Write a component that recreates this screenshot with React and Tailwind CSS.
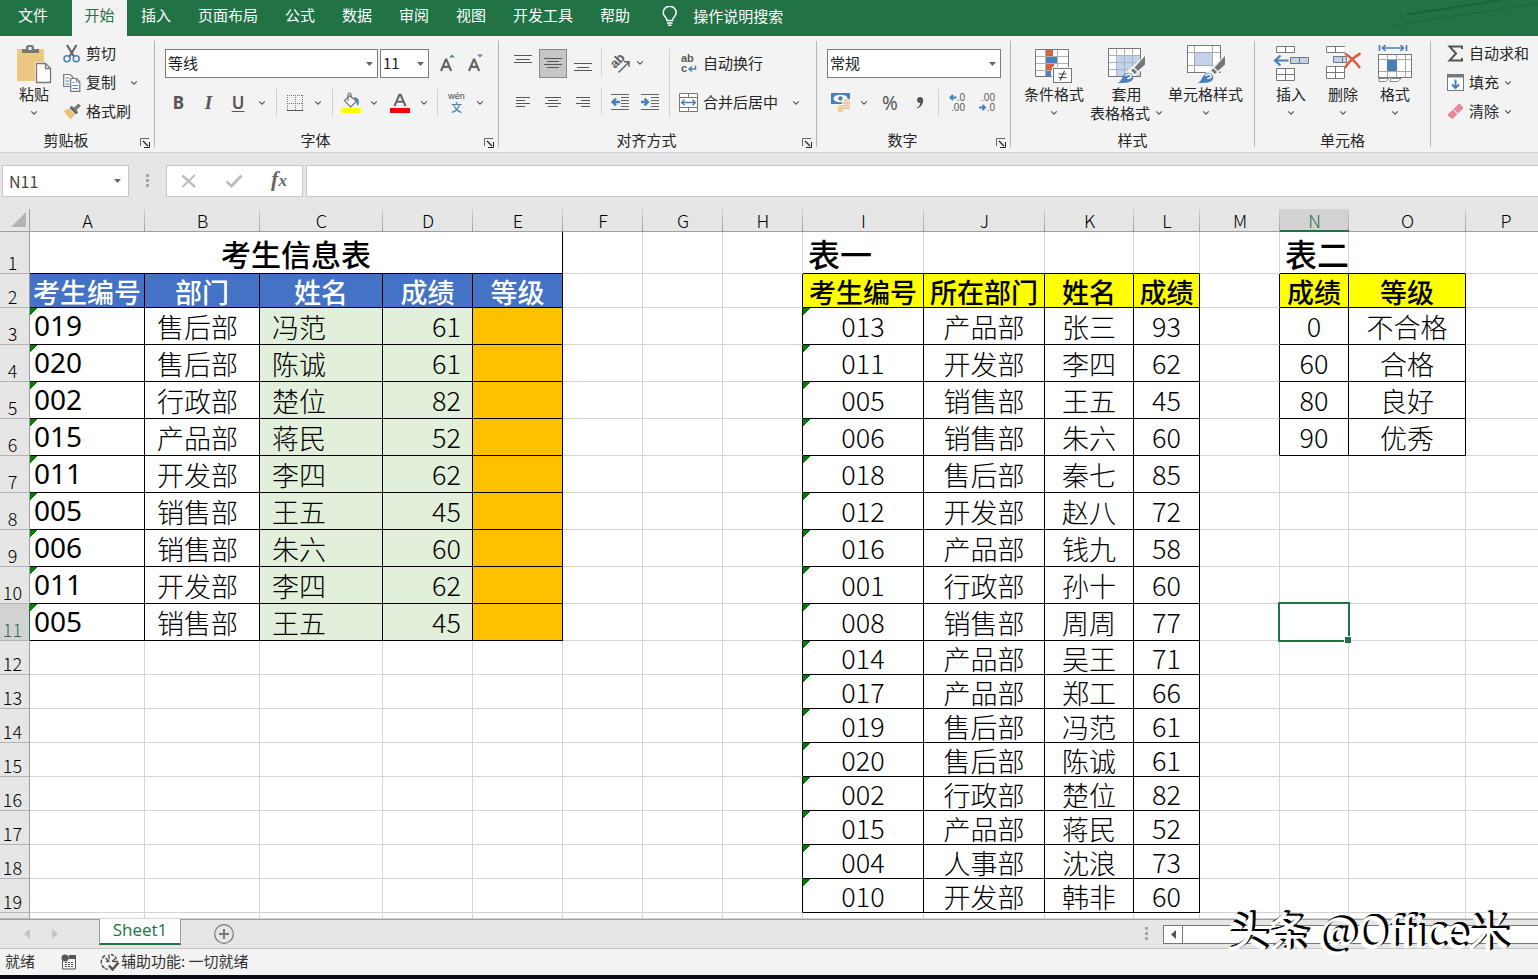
import React from "react";

const cjk = "font-['Noto_Sans_CJK_SC',sans-serif]";

/* ---------- small pieces ---------- */

const Chevron = () => (
  <svg width="8" height="6" viewBox="0 0 8 6" fill="none" className="shrink-0" aria-hidden="true">
    <path d="M1.2 1.4 4 4.1 6.8 1.4" stroke="#555" strokeWidth="1.2" />
  </svg>
);

const Triangle = () => (
  <svg width="7" height="4" viewBox="0 0 7 4" aria-hidden="true">
    <path d="M0 0h7L3.500 4z" fill="#666" />
  </svg>
);

const Rule = ({ className = "h-[27px]" }) => <div className={`w-px shrink-0 bg-[#cfcfcf] ${className}`} />;

const Launcher = () => (
  <button type="button" aria-label="更多设置" className="flex h-[12px] w-[12px] items-center justify-center">
    <svg width="10" height="10" viewBox="0 0 10 10" fill="none" stroke="#666" aria-hidden="true">
      <path d="M.5 8V.5H9" />
      <path d="M3 3l5 5" stroke="#222" strokeWidth="1.200" />
      <path d="M9.500 4v5.500H4" stroke="#222" />
    </svg>
  </button>
);

function Group({ label, width, launcher, last, children }) {
  return (
    <section aria-label={label || "编辑"} className={`flex shrink-0 ${width}`}>
      <div className="flex min-w-0 flex-1 flex-col">
        <div className="h-[93px]">{children}</div>
        {label && (
          <div className="flex h-[23px] items-center">
            <div className="flex-1 pb-[2px] text-center">{label}</div>
            {launcher && (
              <div className="flex w-[22px] justify-end pt-[4px] pr-[3px]">
                <Launcher />
              </div>
            )}
          </div>
        )}
      </div>
      {!last && <div className="my-[5px] w-px bg-[#b4b4b4]" />}
    </section>
  );
}

function Combo({ label, value, options, width }) {
  return (
    <div className={`relative h-[29px] ${width}`}>
      <select
        aria-label={label}
        defaultValue={value}
        className="h-full w-full appearance-none border border-[#7b7b7b] bg-white px-[2px] pb-[2px] text-[15px] leading-[24px] text-[#222] outline-none"
      >
        {options.map((o) => (
          <option key={o}>{o}</option>
        ))}
      </select>
      <span className="pointer-events-none absolute inset-y-0 right-[5px] flex items-center">
        <Triangle />
      </span>
    </div>
  );
}

const IconButton = ({ label, width = "w-[30px]", className = "", children }) => (
  <button type="button" aria-label={label} className={`flex h-[29px] shrink-0 items-center justify-center ${width} ${className}`}>
    {children}
  </button>
);

const DropArrow = ({ label, width = "w-[16px]" }) => (
  <button type="button" aria-label={label} className={`flex h-[27px] shrink-0 items-center justify-center ${width}`}>
    <Chevron />
  </button>
);

/* ---------- icons ---------- */

const PasteIcon = () => (
  <svg width="36" height="40" viewBox="0 0 36 40" aria-hidden="true">
    <rect x="1" y="5" width="27" height="32" rx="1" fill="#ecc880" />
    <path d="M6 9V5h4V3.500A2.500 2.500 0 0 1 12.500 1h3A2.500 2.500 0 0 1 18 3.500V5h5v4z" fill="#777" />
    <rect x="12.500" y="3" width="3" height="3" fill="#f3f3f3" />
    <path d="M19 18h11l6 6v16H19z" fill="#f3f3f3" />
    <path d="M20.500 19.500h9l5 5v14h-14z" fill="#fff" stroke="#777" strokeWidth="1.300" />
    <path d="M29.500 19.500v5h5" fill="none" stroke="#777" strokeWidth="1.300" />
  </svg>
);

const CutIcon = () => (
  <svg width="18" height="19" viewBox="0 0 18 19" fill="none" aria-hidden="true">
    <path d="M4 1l7 11.500M13.500 1L6.500 12.500" stroke="#666" strokeWidth="2.200" />
    <circle cx="4" cy="14.700" r="3" stroke="#4a80ba" strokeWidth="1.500" />
    <circle cx="13.200" cy="14.700" r="3" stroke="#4a80ba" strokeWidth="1.500" />
  </svg>
);

const CopyIcon = () => (
  <svg width="18" height="19" viewBox="0 0 18 19" fill="none" aria-hidden="true">
    <path d="M.7 1.500h6.500l2.800 2.800V13.500H.7z" fill="#fff" stroke="#777" strokeWidth="1.200" />
    <path d="M2.500 5h4M2.500 8h4M2.500 11h4" stroke="#4a80ba" />
    <path d="M7.700 5.500h5.800l3.300 3.300v9.500H7.700z" fill="#fff" stroke="#777" strokeWidth="1.200" />
    <path d="M13.300 5.500v3.500h3.500" stroke="#777" />
    <path d="M9.500 9.500h2M9.500 12.500h5.500M9.500 15.500h5.500" stroke="#4a80ba" />
  </svg>
);

const BrushIcon = () => (
  <svg width="18" height="17" viewBox="0 0 18 17" aria-hidden="true">
    <path d="M.5 8 6 5.500l6 6L7.500 16.500z" fill="#ecc07c" />
    <path d="M6.500 5l2.200-2.200 6.500 6.500L13 11.500z" fill="#666" />
    <path d="M10.500 5 15.500.5 17.800 3 13 7.500z" fill="#777" />
  </svg>
);

const GrowIcon = ({ down }) => (
  <svg width="18" height="18" viewBox="0 0 18 18" fill="none" aria-hidden="true">
    <path d="M2 17 6.800 5.500h.6L12.200 17M3.800 12.900h6.600" stroke="#666" strokeWidth="2.100" />
    {down ? <path d="M10 .5h6l-3 3z" fill="#4a80ba" /> : <path d="M10 3.500h6l-3-3z" fill="#4a80ba" />}
  </svg>
);

const BorderIcon = () => (
  <svg width="18" height="18" viewBox="0 0 18 18" fill="none" aria-hidden="true">
    <path d="M1 1.500h16M1 9.500h16M1.500 1v15M9.500 1v15M16.500 1v15" stroke="#777" strokeDasharray="1 1" />
    <path d="M1 16.500h16" stroke="#555" />
  </svg>
);

const FillIcon = () => (
  <svg width="22" height="21" viewBox="0 0 22 21" fill="none" aria-hidden="true">
    <path d="M4.500 8.500 10 3.500l6.500 6L10.500 15z" fill="#fff" stroke="#777" strokeWidth="1.200" />
    <path d="M8 9V2.500a1.500 1.500 0 0 1 3 0V6" stroke="#777" strokeWidth="1.200" />
    <path d="M13.500 5c5 .3 6.500 3.500 4.500 9-1.200-1-1.500-3-1.500-4.500z" fill="#4a80ba" />
    <rect x="1" y="16" width="20" height="5" fill="#ffff00" />
  </svg>
);

const FontColorIcon = () => (
  <svg width="20" height="21" viewBox="0 0 20 21" fill="none" aria-hidden="true">
    <path d="M4.500 14 9.400 2.800h1.200L15.500 14M6.200 9.800h7.600" stroke="#666" strokeWidth="2.100" />
    <rect y="16" width="20" height="5" fill="#f00" />
  </svg>
);

const lineSets = {
  top: { w: 18, h: 14, d: "M0 .5h18M2 4.500h14M0 7.500h18" },
  middle: { w: 18, h: 14, d: "M0 1.500h18M3 4.500h12M0 7.500h18M3 10.500h12" },
  bottom: { w: 18, h: 14, d: "M0 5.500h18M3 9.500h12M0 12.500h18" },
  left: { w: 14, h: 12, d: "M0 .5h14M0 3.500h9M0 6.500h14M0 9.500h9" },
  center: { w: 16, h: 12, d: "M0 .5h16M3 3.500h10M0 6.500h16M3 9.500h10" },
  right: { w: 14, h: 12, d: "M0 .5h14M5 3.500h9M0 6.500h14M5 9.500h9" },
};

const LinesIcon = ({ kind }) => {
  const s = lineSets[kind];
  return (
    <svg width={s.w} height={s.h} viewBox={`0 0 ${s.w} ${s.h}`} stroke="#555" fill="none" shapeRendering="crispEdges" aria-hidden="true">
      <path d={s.d} />
    </svg>
  );
};

const IndentIcon = ({ more }) => (
  <svg width="18" height="17" viewBox="0 0 18 17" fill="none" aria-hidden="true">
    <path d="M0 .5h18M10 3.500h8M10 6.500h8M10 9.500h8M10 12.500h8M0 15.500h18" stroke="#666" />
    {more ? (
      <path d="M0 8h7M3.500 4.500 7 8 3.500 11.500" stroke="#4a80ba" strokeWidth="2.400" />
    ) : (
      <path d="M1.500 8H9M5 4.500 1.500 8 5 11.500" stroke="#4a80ba" strokeWidth="2.400" />
    )}
  </svg>
);

const glyphFont = { fontFamily: "Liberation Sans", fill: "#5a5a5a" };

const OrientationIcon = () => (
  <svg width="20" height="20" viewBox="0 0 20 20" fill="none" className="overflow-visible" aria-hidden="true">
    <text transform="translate(5 15) rotate(-45)" fontSize="13" fontWeight="700" {...glyphFont}>ab</text>
    <path d="M8.500 18.500 18.500 8.500M14 7.700H19v5" stroke="#666" strokeWidth="1.500" />
  </svg>
);

const WrapIcon = () => (
  <svg width="17" height="20" viewBox="0 0 17 20" fill="none" className="overflow-visible" aria-hidden="true">
    <text x="1" y="8" fontSize="11" fontWeight="700" {...glyphFont}>ab</text>
    <text x="1" y="18" fontSize="11" fontWeight="700" {...glyphFont}>c</text>
    <path d="M15.500 11.500v3.500H9.500M12 12.500 9 15l3 2.500" stroke="#4a80ba" strokeWidth="1.500" />
  </svg>
);

const MergeIcon = () => (
  <svg width="19" height="19" viewBox="0 0 19 19" fill="none" aria-hidden="true">
    <path d="M.5.5h18v18H.5zM.5 4.500h18M.5 14.500h18M9.500.5v4M9.500 14.500v4" fill="#fff" stroke="#777" />
    <path d="M3 9.500h13M5.500 6.700 2.700 9.500l2.800 2.800M13.500 6.700l2.800 2.800-2.800 2.800" stroke="#4a80ba" strokeWidth="1.500" />
  </svg>
);

const CurrencyIcon = () => (
  <svg width="20" height="19" viewBox="0 0 20 19" fill="none" aria-hidden="true">
    <rect width="19" height="11" fill="#4a80ba" />
    <ellipse cx="9.500" cy="5.500" rx="7" ry="3.800" fill="#fff" />
    <circle cx="9.500" cy="5.500" r="2.300" fill="#4a80ba" />
    <path d="M11 6h8v12H6v-6h5z" fill="#f3f3f3" />
    <path d="M12.500 7.500h6M12 10h7M12 12.500h7M12 15h7M7 13.500h5M6.500 15.800h6M7 18h5" stroke="#ecc07c" strokeWidth="1.600" />
  </svg>
);

const DecimalIcon = ({ less }) => (
  <svg width="18" height="20" viewBox="0 0 18 20" fill="none" className="overflow-visible" aria-hidden="true">
    <text x="17" y="8" textAnchor="end" fontSize="10" {...glyphFont}>{less ? ".00" : ".0"}</text>
    <text x="17" y="18" textAnchor="end" fontSize="10" {...glyphFont}>{less ? ".0" : ".00"}</text>
    {less ? (
      <path d="M1 14.500h6M4.500 12 7 14.500 4.500 17" stroke="#4a80ba" strokeWidth="2" />
    ) : (
      <path d="M8.500 4.500H2.500M5 2 2.500 4.500 5 7" stroke="#4a80ba" strokeWidth="2" />
    )}
  </svg>
);

const ConditionalIcon = () => (
  <svg width="38" height="35" viewBox="0 0 38 35" fill="none" aria-hidden="true">
    <rect x=".5" y=".5" width="33" height="27" fill="#fff" />
    <path d="M11 1h7v6h-7zM11 14h9l-3 7h-6z" fill="#d8603f" />
    <path d="M11 8h11v6H11zM11 22h5v6h-5z" fill="#4a80ba" />
    <path d="M.5 7.500h33M.5 14.500h33M.5 21.500h18M10.500.5v27M22.500.5v18" stroke="#b0b0b0" />
    <path d="M33.500 18V.5H.5v27H17" stroke="#777" />
    <rect x="17" y="18" width="21" height="17" fill="#f3f3f3" />
    <rect x="18.500" y="19.500" width="18" height="14" fill="#fff" stroke="#777" />
    <path d="M23.500 25h8M23.500 28.500h8M29.500 22l-4.500 9.500" stroke="#444" strokeWidth="1.200" />
  </svg>
);

const BrushOverlay = () => (
  <>
    <path d="M37.500 7v12L27 28h-9v-4z" fill="#f3f3f3" />
    <path d="M37 8v8.500l-7 6.500-3.500-3.500z" fill="#777" />
    <path d="M25.500 20.500l3.500 3.500-2 2-4-3.500z" fill="#777" />
    <path d="M9.500 35c4.500-1 4.500-8.500 9.500-10 4.500-1 8 3.500 5.500 7-2.500 3-8 3-15 3z" fill="#4a80ba" />
    <path d="M17.500 28c2-3 5.500-2 6 1-1.500 1-2.500.5-4 2" stroke="#fff" strokeWidth="1.400" />
  </>
);

const TableFormatIcon = () => (
  <svg width="38" height="36" viewBox="0 0 38 36" fill="none" aria-hidden="true">
    <rect x=".5" y=".5" width="32" height="28" fill="#fff" />
    <rect x="9" y="8" width="23" height="20" fill="#c0d3ea" />
    <path d="M.5 7.500h32M.5 14.500h32M.5 21.500h32M8.500.5v28M16.500.5v28M24.500.5v28" stroke="#a9b4c0" />
    <rect x=".5" y=".5" width="32" height="28" stroke="#777" />
    <BrushOverlay />
  </svg>
);

const CellStyleIcon = () => (
  <svg width="38" height="39" viewBox="0 0 38 39" fill="none" aria-hidden="true">
    <rect x=".5" y=".5" width="33" height="27" fill="#fff" />
    <rect x="8" y="8" width="17" height="12" fill="#c0d3ea" />
    <path d="M.5 7.500h33M.5 20.500h33M7.500.5v27M25.500.5v27" stroke="#a9a9a9" />
    <rect x=".5" y=".5" width="33" height="27" stroke="#777" />
    <g transform="translate(1 3)">
      <BrushOverlay />
    </g>
  </svg>
);

const InsertIcon = () => (
  <svg width="36" height="38" viewBox="0 0 36 38" fill="none" aria-hidden="true">
    <path d="M3.500.5h18v6h-18zM12.500.5v6M3.500 22.500h18v12h-18zM3.500 28.500h18M12.500 22.500v12" fill="#fff" stroke="#777" />
    <path d="M17.500 11.500h18v6h-18zM26.500 11.500v6" fill="#c0d3ea" stroke="#777" />
    <path d="M2 14.500h13.500M7.500 9.500l-5.500 5 5.500 5" stroke="#4a80ba" strokeWidth="2.200" />
  </svg>
);

const DeleteIcon = () => (
  <svg width="36" height="38" viewBox="0 0 36 38" fill="none" aria-hidden="true">
    <path d="M20 .5H1.500v6H20M10.500.5v6M1.500 20.500h18v12h-18zM1.500 26.500h18M10.500 20.500v12" fill="#fff" stroke="#777" />
    <path d="M8.500 10.500h13v6h-13zM17.500 10.500v6" fill="#c0d3ea" stroke="#777" />
    <path d="M20 7.500c6 4 11 9 15 14.500M35.500 7.500C29 11 23 16.500 20 22" stroke="#d8603f" strokeWidth="2.600" />
  </svg>
);

const FormatIcon = () => (
  <svg width="36" height="39" viewBox="0 0 36 39" fill="none" aria-hidden="true">
    <path d="M2.500 0v6M29.500 0v6M5 3h22M8.500 0l-3 3 3 3M23.500 0l3 3-3 3" stroke="#4a80ba" strokeWidth="1.700" />
    <rect x="1.500" y="9.500" width="33" height="23" fill="#fff" />
    <path d="M1.500 14.500h33M1.500 26.500h33M10.500 9.500v23M19.500 9.500v23M28.500 9.500v23" stroke="#a9a9a9" />
    <rect x="10" y="15" width="10" height="11" fill="#4a80ba" />
    <rect x="1.500" y="9.500" width="33" height="23" stroke="#777" />
    <path d="M2 33.500h10l-3 3H2zM14 33.500h10l-3 3h-8z" fill="#fff" stroke="#888" />
  </svg>
);

const SumIcon = () => (
  <svg width="17" height="17" viewBox="0 0 17 17" fill="none" aria-hidden="true">
    <path d="M15 4V1.500H2.500L9 8.500l-6.500 7H15V13" stroke="#555" strokeWidth="2" />
  </svg>
);

const FillDownIcon = () => (
  <svg width="17" height="19" viewBox="0 0 17 19" fill="none" aria-hidden="true">
    <rect x=".5" y="2.500" width="16" height="15" fill="#fff" stroke="#777" />
    <rect y="1" width="17" height="3.500" fill="#777" />
    <path d="M8.500 6.500v8.500M5 11.500 8.500 15l3.500-3.500" stroke="#4a80ba" strokeWidth="2" />
  </svg>
);

const EraserIcon = () => (
  <svg width="17" height="17" viewBox="0 0 17 17" aria-hidden="true">
    <path d="M6.500 6 11.500 1a1 1 0 0 1 1.500 0l3 3a1 1 0 0 1 0 1.500L11 10.500z" fill="#e6879a" />
    <path d="M5.800 6.700 10.300 11.200 6 15.500H4L.8 12.300v-1z" fill="#e6879a" />
  </svg>
);

/* ---------- title tabs ---------- */

const tabs = ["插入", "页面布局", "公式", "数据", "审阅", "视图", "开发工具", "帮助"];

function TabBar() {
  return (
    <header className="relative h-[36px] shrink-0 overflow-hidden bg-[#217346] text-white">
      <svg className="absolute right-0 top-0" width="160" height="36" viewBox="0 0 160 36" fill="none" aria-hidden="true">
        <path d="M29 14.500 124 0" stroke="#1b633b" strokeWidth="2" />
        <path d="M19 25 160 3.500" stroke="#1e6a40" strokeWidth="1.500" />
      </svg>
      <nav className="relative flex h-full">
        <button type="button" className="w-[72px] pr-[6px] pb-[6px]">文件</button>
        <button type="button" className="w-[55px] bg-[#f3f3f3] pb-[6px] text-[#217346]">开始</button>
        {tabs.map((t) => (
          <button key={t} type="button" className="pr-[13px] pb-[6px] pl-[14px]">{t}</button>
        ))}
        <button type="button" className="ml-[19px] flex items-center gap-[15px] pb-[4px]">
          <svg width="16" height="20" viewBox="0 0 16 20" fill="none" stroke="#fff" strokeWidth="1.500" aria-hidden="true">
            <path d="M5 14.500c0-3-3.800-4-3.800-7.800a6.500 6.500 0 0 1 13 0c0 3.800-3.700 4.800-3.700 7.800zM5 17h5.500M6 19.200h3.500" />
          </svg>
          操作说明搜索
        </button>
      </nav>
    </header>
  );
}

/* ---------- ribbon ---------- */

const SmallCommand = ({ icon, label, arrow, arrowGap = "gap-[4px]" }) => (
  <div className={`flex h-[29px] items-center ${arrowGap}`}>
    <button type="button" className="flex items-center gap-[5px] whitespace-nowrap">
      <span className="flex w-[18px] justify-center">{icon}</span>
      <span className="pb-[2px]">{label}</span>
    </button>
    {arrow && <DropArrow label={`${label}选项`} width="w-[12px]" />}
  </div>
);

const BigCommand = ({ icon, lines, width }) => (
  <button type="button" className={`flex flex-col items-center ${width}`}>
    <span className="flex h-[40px] items-end">{icon}</span>
    <span className="h-[19px] leading-[19px] whitespace-nowrap">{lines[0]}</span>
    <span className="flex h-[19px] items-center gap-[5px] leading-[19px] whitespace-nowrap">
      {lines[1]}
      <Chevron />
    </span>
  </button>
);

function Ribbon() {
  return (
    <div className="flex h-[117px] shrink-0 overflow-hidden border-b border-[#d0d0d0] bg-[#f3f3f3] text-[#262626]">
      <Group label="剪贴板" width="w-[155px]" launcher>
        <div className="flex pt-[3px]">
          <div className="pt-[5px] pl-[12px]">
            <BigCommand icon={<PasteIcon />} lines={["粘贴"]} width="w-[44px]" />
          </div>
          <div className="pl-[7px]">
            <SmallCommand icon={<CutIcon />} label="剪切" />
            <SmallCommand icon={<CopyIcon />} label="复制" arrow arrowGap="gap-[12px]" />
            <SmallCommand icon={<BrushIcon />} label="格式刷" />
          </div>
        </div>
      </Group>

      <Group label="字体" width="w-[344px]" launcher>
        <div className="pt-[13px] pl-[10px]">
          <div className="flex">
            <Combo label="字体" value="等线" options={["等线", "宋体", "微软雅黑"]} width="w-[213px]" />
            <div className="ml-[2px]">
              <Combo label="字号" value="11" options={["10", "11", "12", "14"]} width="w-[49px]" />
            </div>
            <IconButton label="增大字号" width="w-[28px]" className="ml-[5px] pb-[2px]"><GrowIcon /></IconButton>
            <IconButton label="减小字号" width="w-[28px]" className="pb-[2px]"><GrowIcon down /></IconButton>
          </div>
          <div className="mt-[11px] flex h-[27px] items-center font-['Noto_Sans',sans-serif] text-[17px] text-[#555]">
            <button type="button" aria-label="加粗" className="w-[27px] font-bold">B</button>
            <button type="button" aria-label="倾斜" className="w-[33px] font-['Liberation_Serif',serif] text-[19px] font-bold italic">I</button>
            <button type="button" aria-label="下划线" className="w-[26px] font-semibold underline underline-offset-[2px]">U</button>
            <DropArrow label="下划线选项" width="w-[21px]" />
            <Rule className="ml-[4px] h-[27px]" />
            <IconButton label="边框" width="w-[35px]"><BorderIcon /></IconButton>
            <DropArrow label="边框选项" width="w-[12px]" />
            <Rule className="ml-[8px] h-[27px]" />
            <IconButton label="填充颜色" width="w-[36px]"><FillIcon /></IconButton>
            <DropArrow label="填充颜色选项" width="w-[10px]" />
            <IconButton label="字体颜色" width="w-[41px]"><FontColorIcon /></IconButton>
            <DropArrow label="字体颜色选项" width="w-[8px]" />
            <Rule className="ml-[9px] h-[27px]" />
            <button type="button" aria-label="拼音指南" className="flex w-[37px] flex-col items-center">
              <span className="h-[9px] font-['Liberation_Sans',sans-serif] text-[9px] leading-[9px] text-[#444]">wén</span>
              <span className="h-[12px] font-['Noto_Sans_CJK_SC',sans-serif] text-[11px] leading-[12px] font-medium text-[#4a80ba]">文</span>
            </button>
            <DropArrow label="拼音指南选项" width="w-[10px]" />
          </div>
        </div>
      </Group>

      <Group label="对齐方式" width="w-[318px]" launcher>
        <div className="flex pt-[13px] pl-[9px]">
          <div>
            <div className="flex">
              <IconButton label="顶端对齐" className="pb-[4px]"><LinesIcon kind="top" /></IconButton>
              <IconButton label="垂直居中" width="w-[28px]" className="mx-[1px] border border-[#8a8a8a] bg-[#c6c6c6]"><LinesIcon kind="middle" /></IconButton>
              <IconButton label="底端对齐" className="pt-[2px]"><LinesIcon kind="bottom" /></IconButton>
              <Rule className="ml-[3px] h-[27px]" />
              <IconButton label="方向" className="ml-[3px]"><OrientationIcon /></IconButton>
              <DropArrow label="方向选项" width="w-[10px]" />
            </div>
            <div className="mt-[10px] flex">
              <IconButton label="左对齐"><LinesIcon kind="left" /></IconButton>
              <IconButton label="居中"><LinesIcon kind="center" /></IconButton>
              <IconButton label="右对齐"><LinesIcon kind="right" /></IconButton>
              <Rule className="ml-[3px] h-[27px]" />
              <IconButton label="减少缩进量" className="ml-[3px]"><IndentIcon /></IconButton>
              <IconButton label="增加缩进量"><IndentIcon more /></IconButton>
            </div>
          </div>
          <Rule className="ml-[4px] h-[69px]" />
          <div className="pl-[9px]">
            <button type="button" className="flex h-[29px] items-center gap-[5px]">
              <span className="flex w-[19px] justify-center"><WrapIcon /></span>
              <span className="pb-[2px]">自动换行</span>
            </button>
            <div className="mt-[10px] flex h-[29px] items-center gap-[12px]">
              <button type="button" className="flex items-center gap-[5px]">
                <MergeIcon />
                <span className="pb-[2px]">合并后居中</span>
              </button>
              <DropArrow label="合并选项" width="w-[12px]" />
            </div>
          </div>
        </div>
      </Group>

      <Group label="数字" width="w-[194px]" launcher>
        <div className="pt-[13px] pl-[10px]">
          <Combo label="数字格式" value="常规" options={["常规", "数值", "货币", "文本"]} width="w-[174px]" />
          <div className="mt-[11px] flex h-[27px] items-center">
            <IconButton label="会计数字格式" width="w-[28px]"><CurrencyIcon /></IconButton>
            <DropArrow label="会计数字格式选项" width="w-[18px]" />
            <button type="button" aria-label="百分比样式" className="w-[34px] font-['Noto_Sans',sans-serif] text-[19px] text-[#555]">%</button>
            <button type="button" aria-label="千位分隔样式" className="w-[26px]">
              <svg width="8" height="12" viewBox="0 0 8 12" className="mx-auto" aria-hidden="true">
                <path d="M4 0a3 3 0 0 1 3.200 3.300C7.200 7 5 10 1.500 11.500L1 10.500C3 9.500 4 8 4.200 6 2.500 6.200 1 5 1 3.200 1 1.400 2.300 0 4 0z" fill="#555" />
              </svg>
            </button>
            <Rule className="ml-[5px] h-[27px]" />
            <IconButton label="增加小数位数" width="w-[30px]" className="ml-[3px]"><DecimalIcon /></IconButton>
            <IconButton label="减少小数位数" width="w-[30px]"><DecimalIcon less /></IconButton>
          </div>
        </div>
      </Group>

      <Group label="样式" width="w-[244px]">
        <div className="flex pt-[8px] pl-[8px]">
          <BigCommand icon={<ConditionalIcon />} lines={["条件格式"]} width="w-[70px]" />
          <BigCommand icon={<TableFormatIcon />} lines={["套用", "表格格式"]} width="w-[75px]" />
          <BigCommand icon={<CellStyleIcon />} lines={["单元格样式"]} width="w-[83px]" />
        </div>
      </Group>

      <Group label="单元格" width="w-[176px]">
        <div className="flex pt-[8px] pl-[10px]">
          <BigCommand icon={<InsertIcon />} lines={["插入"]} width="w-[52px]" />
          <BigCommand icon={<DeleteIcon />} lines={["删除"]} width="w-[52px]" />
          <BigCommand icon={<FormatIcon />} lines={["格式"]} width="w-[52px]" />
        </div>
      </Group>

      <Group width="w-[107px]" last>
        <div className="pt-[3px] pl-[15px]">
          <SmallCommand icon={<SumIcon />} label="自动求和" />
          <SmallCommand icon={<FillDownIcon />} label="填充" arrow arrowGap="gap-[3px]" />
          <SmallCommand icon={<EraserIcon />} label="清除" arrow arrowGap="gap-[3px]" />
        </div>
      </Group>
    </div>
  );
}

/* ---------- formula bar ---------- */

const Dots = () => (
  <svg width="4" height="14" viewBox="0 0 4 14" fill="#a6a6a6" aria-hidden="true">
    <path d="M0 0h3v3H0zM0 5h3v3H0zM0 10h3v3H0z" />
  </svg>
);

function FormulaBar() {
  return (
    <div className="flex h-[56px] shrink-0 items-start bg-[#e6e6e6] pt-[12px] pl-[2px]">
      <div className="relative h-[32px] w-[127px]">
        <input
          aria-label="名称框"
          defaultValue="N11"
          className="h-full w-full border border-[#c6c6c6] bg-white px-[6px] text-[16px] leading-[28px] text-[#444] outline-none"
        />
        <button type="button" aria-label="名称列表" className="absolute inset-y-0 right-[8px] flex items-center">
          <Triangle />
        </button>
      </div>
      <div className="flex h-[32px] w-[37px] items-center justify-center"><Dots /></div>
      <div className="flex h-[32px] w-[137px] items-center border border-[#c6c6c6] bg-white pl-[7px]">
        <button type="button" aria-label="取消" className="flex w-[30px] justify-center">
          <svg width="16" height="14" viewBox="0 0 16 14" fill="none" stroke="#bdbdbd" aria-hidden="true">
            <path d="M1.500 1.500 14 13" strokeWidth="2.400" />
            <path d="M14 1 1.500 13" strokeWidth="1.800" />
          </svg>
        </button>
        <button type="button" aria-label="输入" className="ml-[15px] flex w-[30px] justify-center">
          <svg width="18" height="14" viewBox="0 0 18 14" fill="none" stroke="#bdbdbd" strokeWidth="3" aria-hidden="true">
            <path d="M1.500 7.500 6.500 12 16.500 1.500" />
          </svg>
        </button>
        <button type="button" aria-label="插入函数" className="ml-[15px] w-[30px] pb-[3px] font-['Liberation_Serif',serif] text-[22px] leading-[26px] font-bold text-[#666] italic">
          f<span className="text-[17px]">x</span>
        </button>
      </div>
      <input aria-label="编辑栏" className="ml-[3px] h-[32px] min-w-0 flex-1 border border-r-0 border-[#c6c6c6] bg-white px-2 outline-none" />
    </div>
  );
}

/* ---------- sheet ---------- */

const columns = [
  ["A", "w-[115px]"], ["B", "w-[115px]"], ["C", "w-[123px]"], ["D", "w-[90px]"], ["E", "w-[90px]"],
  ["F", "w-[80px]"], ["G", "w-[80px]"], ["H", "w-[80px]"], ["I", "w-[121px]"], ["J", "w-[121px]"],
  ["K", "w-[89px]"], ["L", "w-[66px]"], ["M", "w-[80px]"], ["N", "w-[69px]"], ["O", "w-[117px]"], ["P", "w-[80px]"],
];

const candidates = [
  ["019", "售后部", "冯范", "61"], ["020", "售后部", "陈诚", "61"], ["002", "行政部", "楚位", "82"],
  ["015", "产品部", "蒋民", "52"], ["011", "开发部", "李四", "62"], ["005", "销售部", "王五", "45"],
  ["006", "销售部", "朱六", "60"], ["011", "开发部", "李四", "62"], ["005", "销售部", "王五", "45"],
];

const tableOne = [
  ["013", "产品部", "张三", "93"], ["011", "开发部", "李四", "62"], ["005", "销售部", "王五", "45"],
  ["006", "销售部", "朱六", "60"], ["018", "售后部", "秦七", "85"], ["012", "开发部", "赵八", "72"],
  ["016", "产品部", "钱九", "58"], ["001", "行政部", "孙十", "60"], ["008", "销售部", "周周", "77"],
  ["014", "产品部", "吴王", "71"], ["017", "产品部", "郑工", "66"], ["019", "售后部", "冯范", "61"],
  ["020", "售后部", "陈诚", "61"], ["002", "行政部", "楚位", "82"], ["015", "产品部", "蒋民", "52"],
  ["004", "人事部", "沈浪", "73"], ["010", "开发部", "韩非", "60"],
];

const tableTwo = [["0", "不合格"], ["60", "合格"], ["80", "良好"], ["90", "优秀"]];

/* Blocks outlined in black: [first column, last column, first row, last row] */
const blocks = [[0, 4, 1, 11], [8, 11, 2, 19], [13, 14, 2, 6]];
const inBlock = (c, r) => blocks.some(([c0, c1, r0, r1]) => c >= c0 && c <= c1 && r >= r0 && r <= r1);

const headings = {
  0: "考生编号", 1: "部门", 2: "姓名", 3: "成绩", 4: "等级",
  8: "考生编号", 9: "所在部门", 10: "姓名", 11: "成绩", 13: "成绩", 14: "等级",
};

const marker = "bg-[linear-gradient(135deg,#008000_5px,transparent_5px)]";
const heading = "text-center text-[27px] leading-[30px] font-medium pt-[2px]";
const number = "text-[27px] leading-[30px] font-light";
const words = "text-[27px] leading-[30px] font-light pt-[2px]";

function cellContent(c, r) {
  if (r === 1) {
    if (c === 8) return ["表一", "pl-[5px] text-[32px] leading-[36px] font-medium"];
    if (c === 13) return ["表二", "pl-[5px] text-[32px] leading-[36px] font-medium"];
    return [null, ""];
  }
  if (r === 2) {
    if (!(c in headings)) return [null, ""];
    return [headings[c], `${heading} ${c < 5 ? "bg-[#4472c4] text-white" : "bg-[#ffff00]"}`];
  }
  if (c < 5 && r <= 11) {
    const text = candidates[r - 3][c];
    if (c === 0) return [text, `align-top pl-[4px] font-['Noto_Sans',sans-serif] text-[28px] leading-[34px] ${marker}`];
    if (c === 1) return [text, `${words} pl-[12px]`];
    if (c === 2) return [text, `${words} bg-[#e2efda] pl-[12px]`];
    if (c === 3) return [text, `${number} bg-[#e2efda] pr-[11px] text-right`];
    return [null, "bg-[#ffc000]"];
  }
  if (c >= 8 && c <= 11 && r <= 19) {
    const style = c === 8 || c === 11 ? number : words;
    return [tableOne[r - 3][c - 8], `${style} text-center ${c === 8 ? marker : ""}`];
  }
  if ((c === 13 || c === 14) && r <= 6) {
    return [tableTwo[r - 3][c - 13], `${c === 13 ? number : words} text-center`];
  }
  return [null, ""];
}

const rowHeight = (r) => {
  if (r === 1) return "h-[42px]";
  if (r === 2) return "h-[34px]";
  if (r <= 11) return "h-[37px]";
  return r === 20 ? "h-[6px]" : "h-[34px]";
};

function Cell({ c, r }) {
  const [text, style] = cellContent(c, r);
  const right = inBlock(c, r) || inBlock(c + 1, r) ? "border-r-black" : "border-r-[#d4d4d4]";
  const bottom = inBlock(c, r) || inBlock(c, r + 1) ? "border-b-black" : "border-b-[#d4d4d4]";
  const active = c === 13 && r === 11;
  return (
    <td className={`border-r border-b p-0 whitespace-nowrap ${right} ${bottom} ${style} ${active ? "relative" : ""}`}>
      {text}
      {active && (
        <div className="absolute -top-[2px] -right-[2px] -bottom-[2px] -left-[2px] border-2 border-[#217346]">
          <div className="absolute -right-[3px] -bottom-[3px] h-[7px] w-[7px] border border-r-0 border-b-0 border-white bg-[#217346]" />
        </div>
      )}
    </td>
  );
}

function Sheet() {
  const rows = Array.from({ length: 20 }, (_, i) => i + 1);
  return (
    <main className="min-h-0 flex-1 overflow-hidden bg-white">
      <table className="w-full table-fixed border-separate border-spacing-0 text-black">
        <colgroup>
          <col className="w-[30px]" />
          {columns.map(([name, w]) => (
            <col key={name} className={w} />
          ))}
          <col />
        </colgroup>
        <thead>
          <tr className="h-[23px] bg-[#e6e6e6]">
            <th aria-label="全选" className="border-r border-b border-[#9f9f9f] p-0 align-bottom">
              <svg width="15" height="15" viewBox="0 0 15 15" className="mb-[4px] ml-[11px]" aria-hidden="true">
                <path d="M15 0v15H0z" fill="#b4b4b4" />
              </svg>
            </th>
            {columns.map(([name]) => (
              <th
                key={name}
                scope="col"
                className={`border-b p-0 text-[18px] leading-[22px] font-light ${
                  name === "N" ? "border-b-[#217346] bg-[#d2d2d2] text-[#217346] shadow-[inset_0_-1px_0_#217346]" : "border-b-[#9f9f9f]"
                } bg-[linear-gradient(to_bottom,#d0d0d0,#9f9f9f)] bg-[length:1px_100%] bg-right bg-no-repeat`}
              >
                {name}
              </th>
            ))}
            <th aria-hidden="true" className="border-b border-[#9f9f9f] p-0" />
          </tr>
        </thead>
        <tbody>
          {rows.map((r) => (
            <tr key={r} className={rowHeight(r)}>
              <th
                scope="row"
                className={`border-r border-b p-0 pr-[4px] text-center align-bottom text-[18px] leading-[22px] font-light ${
                  r === 11 ? "border-r-[#217346] bg-[#d2d2d2] text-[#217346]" : "border-r-[#9f9f9f] bg-[#e6e6e6]"
                } border-b-[#b4b4b4]`}
              >
                {r < 20 ? r : null}
              </th>
              {columns.map(([name], c) => {
                if (r === 1 && c === 0) {
                  return (
                    <td key={name} colSpan={5} className="border-r border-b border-black p-0 text-center text-[30px] leading-[36px] font-medium">
                      考生信息表
                    </td>
                  );
                }
                if (r === 1 && c < 5) return null;
                return <Cell key={name} c={c} r={r} />;
              })}
              <td className="border-b border-[#d4d4d4] p-0" />
            </tr>
          ))}
        </tbody>
      </table>
    </main>
  );
}

/* ---------- bottom bars ---------- */

function SheetTabs() {
  return (
    <div className="relative flex h-[29px] shrink-0 bg-[#e6e6e6]">
      <div className="flex w-[99px] items-center gap-[22px] border-t border-[#9f9f9f] pl-[24px]">
        <button type="button" aria-label="上一个工作表">
          <svg width="6" height="10" viewBox="0 0 6 10" aria-hidden="true"><path d="M6 0v10L0 5z" fill="#c3c3c3" /></svg>
        </button>
        <button type="button" aria-label="下一个工作表">
          <svg width="6" height="10" viewBox="0 0 6 10" aria-hidden="true"><path d="M0 0v10l6-5z" fill="#c3c3c3" /></svg>
        </button>
      </div>
      <button
        type="button"
        className="h-[26px] w-[82px] border-x border-b-2 border-x-[#9f9f9f] border-b-[#217346] bg-white pb-[3px] font-['Open_Sans',sans-serif] text-[17px] leading-[20px] text-[#217346]"
      >
        Sheet1
      </button>
      <div className="flex flex-1 items-center border-t border-[#9f9f9f] pl-[33px]">
        <button type="button" aria-label="新工作表">
          <svg width="20" height="20" viewBox="0 0 20 20" fill="none" stroke="#777" aria-hidden="true">
            <circle cx="10" cy="10" r="9.300" strokeWidth="1.200" />
            <path d="M10 5v10M5 10h10" strokeWidth="2" />
          </svg>
        </button>
      </div>
      <div className="flex w-[393px] items-center border-t border-[#9f9f9f]">
        <Dots />
        <button type="button" aria-label="向左滚动" className="ml-[14px] flex h-[19px] w-[20px] items-center justify-center border border-[#777] bg-white">
          <svg width="5" height="9" viewBox="0 0 5 9" aria-hidden="true"><path d="M5 0v9L0 4.500z" fill="#555" /></svg>
        </button>
        <div className="-ml-px h-[19px] flex-1 border border-r-0 border-[#777] bg-white" />
      </div>
      <div
        className={`absolute -top-[18px] right-[29px] z-10 text-[41px] leading-[56px] whitespace-nowrap text-white [text-shadow:1px_-1px_0_#000,2px_-1px_0_#000,2px_-2px_0_#000,3px_-2px_0_#000,-1px_1px_1px_#fff] ${cjk}`}
      >
        <span className="font-medium">头条</span> @Office米
      </div>
    </div>
  );
}

function StatusBar() {
  return (
    <footer className="flex h-[31px] shrink-0 items-center border-t border-b-4 border-t-[#c6c6c6] border-b-[#0a0a12] bg-[#f3f3f3] pl-[5px] text-[#333]">
      <span className="pb-[2px]">就绪</span>
      <button type="button" aria-label="宏录制" className="ml-[26px]">
        <svg width="16" height="16" viewBox="0 0 16 16" fill="none" aria-hidden="true">
          <path d="M1.500 7v8h13V3H8" stroke="#555" />
          <path d="M8 1h7v4H7z" fill="#555" />
          <circle cx="4" cy="4" r="3.500" fill="#555" />
          <path d="M4 8.500h8M4 10.500h8M4 12.500h8" stroke="#555" strokeDasharray="2 1" />
        </svg>
      </button>
      <button type="button" className="ml-[23px] flex items-center gap-[1px]">
        <svg width="20" height="18" viewBox="0 0 20 18" fill="none" stroke="#555" aria-hidden="true">
          <path d="M5 2.500a7.500 7.500 0 0 0 0 13" strokeWidth="1.500" strokeDasharray="4 1.500" />
          <path d="M5 15.500c1.500.8 3 1 4.500.7M11 1.500c3 .5 5 2.500 5.500 5" strokeWidth="1.300" strokeDasharray="3 1.500" />
          <path d="M9 1.500v5M5.500 5 9 8.500M6 8.500h3.500M13 8.500h5M15.500 5.500 12 8.500" strokeWidth="1.300" />
          <path d="M9 12.500l3.500 4 6-7" strokeWidth="2.600" />
        </svg>
        <span className="pb-[2px]">辅助功能: 一切就绪</span>
      </button>
    </footer>
  );
}

export default function App() {
  return (
    <div className={`flex h-screen flex-col overflow-hidden bg-[#e6e6e6] text-[15px] leading-[22px] ${cjk}`}>
      <TabBar />
      <Ribbon />
      <FormulaBar />
      <Sheet />
      <SheetTabs />
      <StatusBar />
    </div>
  );
}
